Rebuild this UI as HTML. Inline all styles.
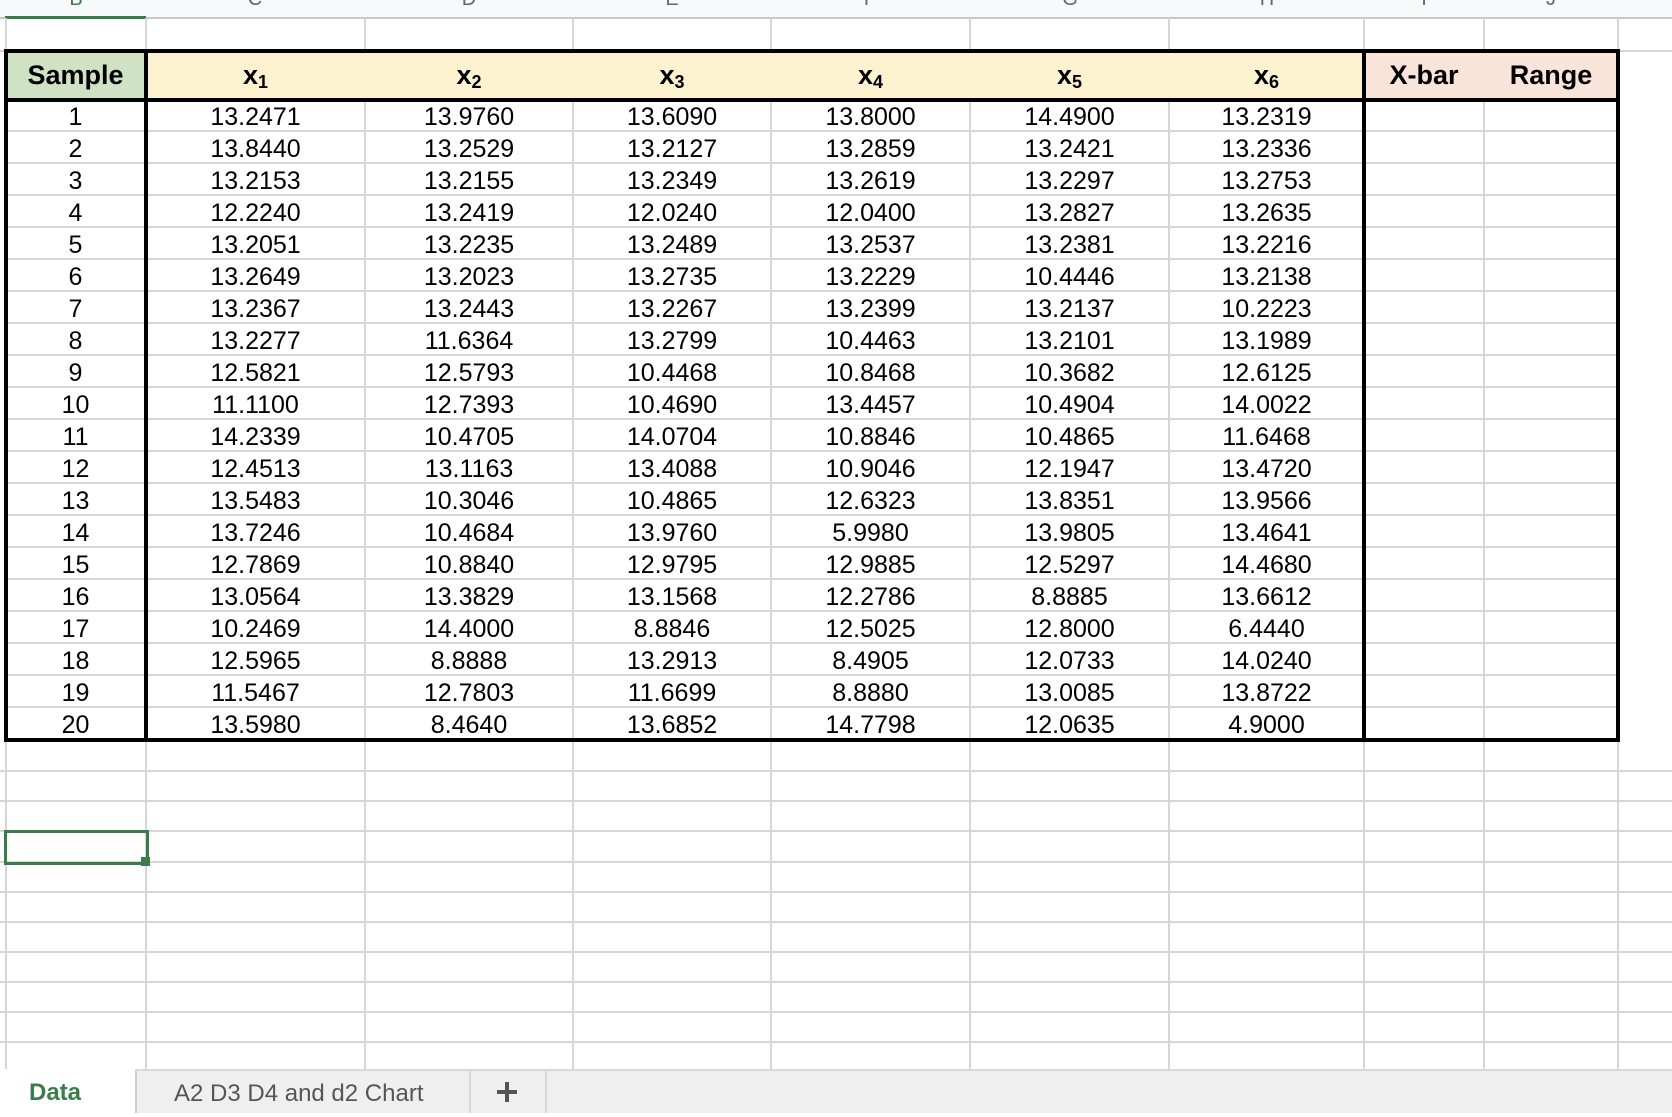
<!DOCTYPE html>
<html><head><meta charset="utf-8">
<style>
*{margin:0;padding:0;box-sizing:border-box}
body{width:1672px;height:1113px;overflow:hidden;background:#fff;font-family:"Liberation Sans",Arial,sans-serif;position:relative}
.v{position:absolute;width:2px;background:#d6d6d6;top:18px;height:1052px}
.h{position:absolute;height:2px;background:#d6d6d6;left:0;width:1672px}
#colhdr{position:absolute;left:0;top:0;width:1672px;height:19px;background:#f8f9fa;border-bottom:2px solid #c8c8c8}
#colhdr span{position:absolute;top:-12px;font-size:20px;color:#666;width:40px;text-align:center}
table{position:absolute;left:5px;top:52px;border-collapse:collapse;table-layout:fixed}
td{text-align:center;font-size:25px;height:32px;padding:0;color:#000;line-height:32px;white-space:nowrap;position:relative;top:2px}
tr.hd td{height:47px;font-weight:bold;font-size:27px;line-height:47px;top:0}
sub{font-size:18px;vertical-align:-4px;line-height:0}
.b{position:absolute;background:#000}
</style></head><body>
<div id="colhdr">
<span style="left:56px;color:#3a7d4a">B</span><span style="left:235px">C</span><span style="left:449px">D</span><span style="left:652px">E</span><span style="left:850px">F</span><span style="left:1050px">G</span><span style="left:1247px">H</span><span style="left:1404px">I</span><span style="left:1531px">J</span>
</div>
<div style="position:absolute;left:5px;top:16px;width:141px;height:3px;background:#3a7d4a"></div>

<div class="v" style="left:5px"></div>
<div class="v" style="left:145px"></div>
<div class="v" style="left:364px"></div>
<div class="v" style="left:572px"></div>
<div class="v" style="left:770px"></div>
<div class="v" style="left:969px"></div>
<div class="v" style="left:1168px"></div>
<div class="v" style="left:1363px"></div>
<div class="v" style="left:1483px"></div>
<div class="v" style="left:1617px"></div>

<div class="h" style="top:50px"></div>
<div class="h" style="top:770px"></div>
<div class="h" style="top:800px"></div>
<div class="h" style="top:830px"></div>
<div class="h" style="top:861px"></div>
<div class="h" style="top:891px"></div>
<div class="h" style="top:921px"></div>
<div class="h" style="top:951px"></div>
<div class="h" style="top:981px"></div>
<div class="h" style="top:1011px"></div>
<div class="h" style="top:1041px"></div>

<div style="position:absolute;left:5px;top:50px;width:141px;height:49px;background:#cfe2c3"></div>
<div style="position:absolute;left:146px;top:50px;width:1218px;height:49px;background:#fdf2d0"></div>
<div style="position:absolute;left:1364px;top:50px;width:254px;height:49px;background:#f9e4d9"></div>

<table>
<colgroup><col style="width:141px"><col style="width:219px"><col style="width:208px"><col style="width:198px"><col style="width:199px"><col style="width:199px"><col style="width:195px"><col style="width:120px"><col style="width:134px"></colgroup>
<tr class="hd"><td>Sample</td><td>x<sub>1</sub></td><td>x<sub>2</sub></td><td>x<sub>3</sub></td><td>x<sub>4</sub></td><td>x<sub>5</sub></td><td>x<sub>6</sub></td><td>X-bar</td><td>Range</td></tr>
<tr><td>1</td><td>13.2471</td><td>13.9760</td><td>13.6090</td><td>13.8000</td><td>14.4900</td><td>13.2319</td><td></td><td></td></tr>
<tr><td>2</td><td>13.8440</td><td>13.2529</td><td>13.2127</td><td>13.2859</td><td>13.2421</td><td>13.2336</td><td></td><td></td></tr>
<tr><td>3</td><td>13.2153</td><td>13.2155</td><td>13.2349</td><td>13.2619</td><td>13.2297</td><td>13.2753</td><td></td><td></td></tr>
<tr><td>4</td><td>12.2240</td><td>13.2419</td><td>12.0240</td><td>12.0400</td><td>13.2827</td><td>13.2635</td><td></td><td></td></tr>
<tr><td>5</td><td>13.2051</td><td>13.2235</td><td>13.2489</td><td>13.2537</td><td>13.2381</td><td>13.2216</td><td></td><td></td></tr>
<tr><td>6</td><td>13.2649</td><td>13.2023</td><td>13.2735</td><td>13.2229</td><td>10.4446</td><td>13.2138</td><td></td><td></td></tr>
<tr><td>7</td><td>13.2367</td><td>13.2443</td><td>13.2267</td><td>13.2399</td><td>13.2137</td><td>10.2223</td><td></td><td></td></tr>
<tr><td>8</td><td>13.2277</td><td>11.6364</td><td>13.2799</td><td>10.4463</td><td>13.2101</td><td>13.1989</td><td></td><td></td></tr>
<tr><td>9</td><td>12.5821</td><td>12.5793</td><td>10.4468</td><td>10.8468</td><td>10.3682</td><td>12.6125</td><td></td><td></td></tr>
<tr><td>10</td><td>11.1100</td><td>12.7393</td><td>10.4690</td><td>13.4457</td><td>10.4904</td><td>14.0022</td><td></td><td></td></tr>
<tr><td>11</td><td>14.2339</td><td>10.4705</td><td>14.0704</td><td>10.8846</td><td>10.4865</td><td>11.6468</td><td></td><td></td></tr>
<tr><td>12</td><td>12.4513</td><td>13.1163</td><td>13.4088</td><td>10.9046</td><td>12.1947</td><td>13.4720</td><td></td><td></td></tr>
<tr><td>13</td><td>13.5483</td><td>10.3046</td><td>10.4865</td><td>12.6323</td><td>13.8351</td><td>13.9566</td><td></td><td></td></tr>
<tr><td>14</td><td>13.7246</td><td>10.4684</td><td>13.9760</td><td>5.9980</td><td>13.9805</td><td>13.4641</td><td></td><td></td></tr>
<tr><td>15</td><td>12.7869</td><td>10.8840</td><td>12.9795</td><td>12.9885</td><td>12.5297</td><td>14.4680</td><td></td><td></td></tr>
<tr><td>16</td><td>13.0564</td><td>13.3829</td><td>13.1568</td><td>12.2786</td><td>8.8885</td><td>13.6612</td><td></td><td></td></tr>
<tr><td>17</td><td>10.2469</td><td>14.4000</td><td>8.8846</td><td>12.5025</td><td>12.8000</td><td>6.4440</td><td></td><td></td></tr>
<tr><td>18</td><td>12.5965</td><td>8.8888</td><td>13.2913</td><td>8.4905</td><td>12.0733</td><td>14.0240</td><td></td><td></td></tr>
<tr><td>19</td><td>11.5467</td><td>12.7803</td><td>11.6699</td><td>8.8880</td><td>13.0085</td><td>13.8722</td><td></td><td></td></tr>
<tr><td>20</td><td>13.5980</td><td>8.4640</td><td>13.6852</td><td>14.7798</td><td>12.0635</td><td>4.9000</td><td></td><td></td></tr>
</table>

<div style="position:absolute;left:5px;top:100px;width:1613px;height:640px;background:repeating-linear-gradient(to bottom,transparent 0,transparent 30px,#d6d6d6 30px,#d6d6d6 32px);pointer-events:none"></div>

<div class="b" style="left:4px;top:49px;width:1616px;height:4px"></div>
<div class="b" style="left:4px;top:98px;width:1616px;height:4px"></div>
<div class="b" style="left:4px;top:738px;width:1616px;height:4px"></div>
<div class="b" style="left:4px;top:49px;width:4px;height:693px"></div>
<div class="b" style="left:144px;top:49px;width:4px;height:693px"></div>
<div class="b" style="left:1362px;top:49px;width:4px;height:693px"></div>
<div class="b" style="left:1616px;top:49px;width:4px;height:693px"></div>

<div style="position:absolute;left:4px;top:830px;width:145px;height:35px;border:3px solid #3a7d4a"></div>
<div style="position:absolute;left:141px;top:857px;width:9px;height:9px;background:#3a7d4a"></div>

<div style="position:absolute;left:0;top:1069px;width:1672px;height:44px;background:#efefef;border-top:2px solid #d8d8d8"></div>
<div style="position:absolute;left:0;top:1069px;width:135px;height:44px;background:#fff;color:#3a7d4a;font-weight:bold;font-size:24px;line-height:48px;padding-left:29px">Data</div>
<div style="position:absolute;left:135px;top:1071px;width:2px;height:42px;background:#d0d0d0"></div>
<div style="position:absolute;left:174px;top:1071px;height:42px;line-height:46px;font-size:24px;color:#555">A2 D3 D4 and d2 Chart</div>
<div style="position:absolute;left:469px;top:1071px;width:2px;height:42px;background:#d8d8d8"></div>
<div style="position:absolute;left:497px;top:1090px;width:20px;height:4px;background:#555"></div>
<div style="position:absolute;left:505px;top:1082px;width:4px;height:20px;background:#555"></div>
<div style="position:absolute;left:545px;top:1071px;width:2px;height:42px;background:#d8d8d8"></div>
</body></html>
